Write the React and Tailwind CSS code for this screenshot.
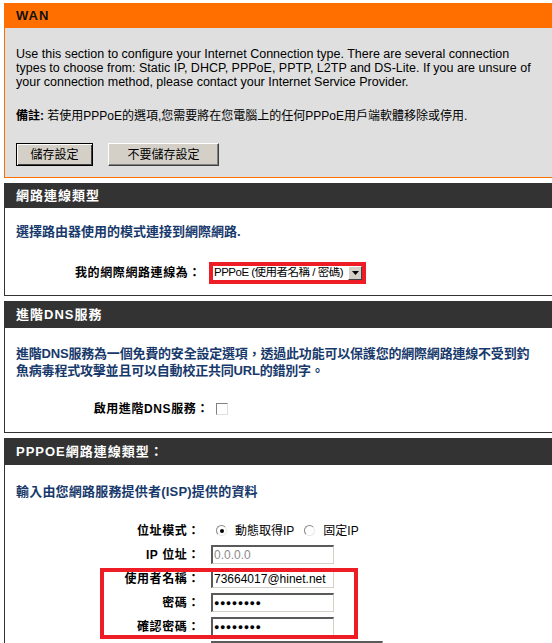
import React from 'react'

const font = "font-['Liberation_Sans','Noto_Sans_CJK_TC',sans-serif]"

function Header({ title, orange, tall }) {
  return (
    <div
      className={`${orange ? 'bg-[#ff6f00] text-[#111]' : 'bg-[#333333] text-white'} ${
        tall ? 'h-[27px]' : 'h-[25px]'
      } flex items-center pl-[12px] text-[13px] font-bold tracking-[1px]`}
    >
      {title}
    </div>
  )
}

function Body({ children, className = '' }) {
  return (
    <div className={`border-l border-b border-[#333333] bg-white ${className}`}>{children}</div>
  )
}

function Field({ value, gray, dots, width = 'w-[123px]' }) {
  return (
    <div
      className={`${width} h-[19px] border-t-2 border-l-2 border-t-[#5a5a5a] border-l-[#5a5a5a] border-b border-r border-b-[#d4d0c8] border-r-[#d4d0c8] bg-white flex items-center pl-[1px] text-[12px] leading-none ${
        gray ? 'text-[#8a8a8a]' : 'text-black'
      }`}
    >
      {dots ? <span className="text-[9px] tracking-[0.5px] font-bold">●●●●●●●●</span> : value}
    </div>
  )
}

function Radio({ checked }) {
  return (
    <span className="w-[11px] h-[11px] rounded-full border border-t-[#888] border-l-[#888] border-b-[#e8e8e8] border-r-[#e8e8e8] bg-white flex items-center justify-center">
      {checked && <span className="w-[4px] h-[4px] rounded-full bg-black" />}
    </span>
  )
}

function Row({ label, children }) {
  return (
    <div className="flex items-center h-[19px]">
      <div className="w-[195px] text-right text-[12px] font-bold tracking-[0.6px] text-black">{label}</div>
      <div className="ml-[11px] flex items-center">{children}</div>
    </div>
  )
}

export default function App() {
  return (
    <div className={`${font} w-[552px] h-[643px] overflow-hidden bg-white pt-[3px] pl-[4px]`}>
      {/* WAN */}
      <Header title="WAN" orange />
      <div className="bg-[#dfdfdf] border-l border-b border-[#ff6f00] pl-[11px] pt-[19px] pb-[11px]">
        <p className="text-[12.5px] leading-[14px] text-black whitespace-nowrap">
          Use this section to configure your Internet Connection type. There are several connection
          <br />
          types to choose from: Static IP, DHCP, PPPoE, PPTP, L2TP and DS-Lite. If you are unsure of
          <br />
          your connection method, please contact your Internet Service Provider.
        </p>
        <p className="mt-[20px] text-[12px] leading-[14px] text-black">
          <span className="font-bold">備註:</span> 若使用PPPoE的選項,您需要將在您電腦上的任何PPPoE用戶端軟體移除或停用.
        </p>
        <div className="mt-[20px] flex gap-[15px]">
          <button className="w-[77px] h-[23px] bg-[#d4d0c8] border border-black shadow-[inset_1px_1px_0_#fff,inset_-1px_-1px_0_#404040] text-[12px] text-black">
            儲存設定
          </button>
          <button className="w-[111px] h-[23px] bg-[#d4d0c8] border border-t-white border-l-white border-b-[#404040] border-r-[#404040] shadow-[inset_-1px_-1px_0_#808080] text-[12px] text-black">
            不要儲存設定
          </button>
        </div>
      </div>

      {/* connection type */}
      <div className="mt-[5px]">
        <Header title="網路連線類型" />
        <Body className="pt-[16px] pb-[11px]">
          <p className="pl-[11px] text-[13px] leading-[16px] font-bold text-[#17396b]">
            選擇路由器使用的模式連接到網際網路.
          </p>
          <div className="mt-[22px] flex items-center">
            <div className="w-[196px] text-right text-[12px] font-bold tracking-[0.6px] text-black">
              我的網際網路連線為：
            </div>
            <div className="ml-[8px] border-4 border-[#ee1c25] flex">
              <div className="w-[149px] h-[14px] bg-white flex items-center">
                <span className="pl-[1px] flex-1 overflow-hidden text-[11.5px] tracking-[-0.5px] leading-none text-black whitespace-nowrap">
                  PPPoE (使用者名稱 / 密碼)
                </span>
                <span className="w-[14px] h-[14px] shrink-0 bg-[#d4d0c8] border border-t-white border-l-white border-b-[#404040] border-r-[#404040] flex items-center justify-center">
                  <svg width="7" height="4" viewBox="0 0 7 4">
                    <path d="M0 0H7L3.5 4Z" fill="#000" />
                  </svg>
                </span>
              </div>
            </div>
          </div>
        </Body>
      </div>

      {/* advanced DNS */}
      <div className="mt-[5px]">
        <Header title="進階DNS服務" tall />
        <Body className="pt-[17px] pb-[15px]">
          <p className="pl-[11px] text-[13px] leading-[17px] font-bold text-[#17396b] tracking-[-0.2px] whitespace-nowrap">
            進階DNS服務為一個免費的安全設定選項，透過此功能可以保護您的網際網路連線不受到釣
            <br />
            魚病毒程式攻擊並且可以自動校正共同URL的錯別字。
          </p>
          <div className="mt-[22px] flex items-center h-[16px]">
            <div className="w-[204px] text-right text-[12px] font-bold tracking-[0.6px] text-black">
              啟用進階DNS服務：
            </div>
            <span className="ml-[7px] w-[12px] h-[12px] bg-white border border-t-[#808080] border-l-[#808080] border-b-[#e0e0e0] border-r-[#e0e0e0]" />
          </div>
        </Body>
      </div>

      {/* PPPoE */}
      <div className="mt-[5px]">
        <Header title="PPPOE網路連線類型：" tall />
        <Body className="pt-[19px] pb-[20px] relative">
          <p className="pl-[11px] text-[13px] leading-[16px] font-bold text-[#17396b] tracking-[0.2px]">
            輸入由您網路服務提供者(ISP)提供的資料
          </p>
          <div className="mt-[21px] flex flex-col gap-[5px]">
            <Row label="位址模式：">
              <span className="ml-[5px]">
                <Radio checked />
              </span>
              <span className="ml-[8px] text-[12px] text-black">動態取得IP</span>
              <span className="ml-[10px]">
                <Radio />
              </span>
              <span className="ml-[8px] text-[12px] text-black">固定IP</span>
            </Row>
            <Row label="IP 位址：">
              <Field value="0.0.0.0" gray />
            </Row>
            <Row label="使用者名稱：">
              <Field value="73664017@hinet.net" />
            </Row>
            <Row label="密碼：">
              <Field dots />
            </Row>
            <Row label="確認密碼：">
              <Field dots />
            </Row>
            <Row label="">
              <Field value="" width="w-[172px]" />
            </Row>
          </div>
          {/* annotation box */}
          <div className="absolute left-[95px] top-[103px] w-[258px] h-[71px] border-4 border-[#ee1c25] pointer-events-none" />
        </Body>
      </div>
    </div>
  )
}
